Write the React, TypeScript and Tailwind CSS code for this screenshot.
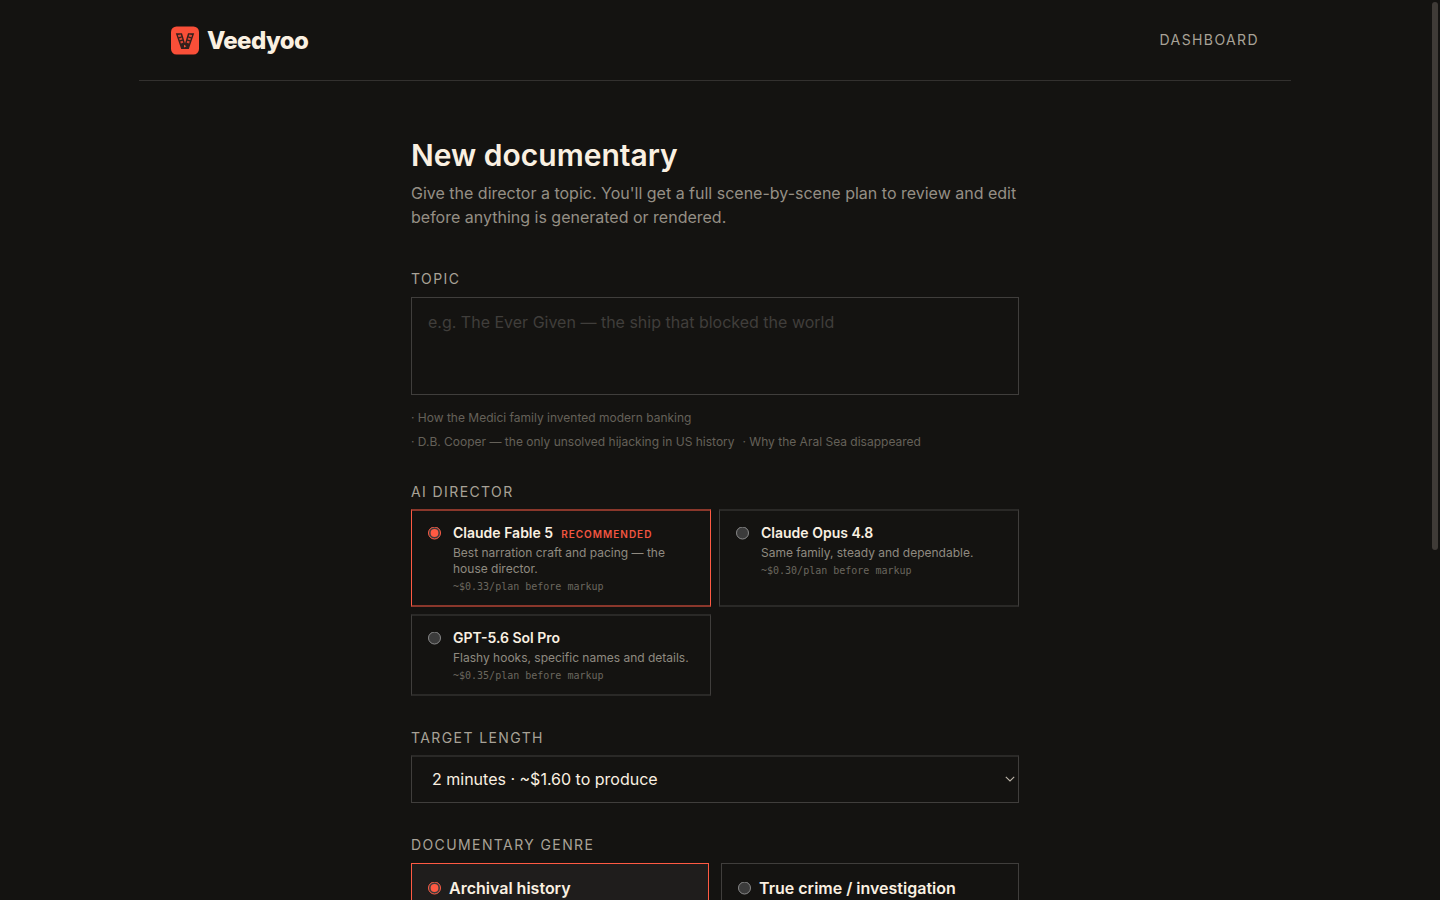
import type { ReactNode } from 'react';

const directors = [
  {
    name: 'Claude Fable 5',
    blurb: 'Best narration craft and pacing — the house director.',
    cost: '~$0.33/plan before markup',
    recommended: true,
  },
  {
    name: 'Claude Opus 4.8',
    blurb: 'Same family, steady and dependable.',
    cost: '~$0.30/plan before markup',
  },
  {
    name: 'GPT-5.6 Sol Pro',
    blurb: 'Flashy hooks, specific names and details.',
    cost: '~$0.35/plan before markup',
  },
];

const genres = ['Archival history', 'True crime / investigation'];

const Logo = () => (
  <svg
    width="28"
    height="28"
    viewBox="0 0 28 28"
    fill="none"
    className="overflow-visible"
  >
    <rect y="0.5" width="28" height="28" rx="5.5" fill="#f94f38" />
    <path
      d="M4.8 7.2h6.2l3 10.4 3-10.4h6.2L17.8 23h-7.6z"
      fill="#33201c"
    />
    {/* film frames */}
    <path
      d="M6.8 8.9l3-.5.6 2-2.9.8zM8 12.4l2.9-.8.5 1.9-2.7.8zM9.2 15.6l2.5-.8.6 1.9-2.4.8zM21.2 8.9l-3-.5-.6 2 2.9.8zM20 12.4l-2.9-.8-.5 1.9 2.7.8zM18.8 15.6l-2.5-.8-.6 1.9 2.4.8z"
      fill="#d94633"
    />
    <path d="M13 18.8l2.4 1.4-2.4 1.4z" fill="#f94f38" />
  </svg>
);

const Label = ({ children }: { children: ReactNode }) => (
  <div className="text-sm tracking-[1.4px] text-[#a8a297] uppercase">
    {children}
  </div>
);

const App = () => {
  return (
    <div className="flex h-[900px] overflow-hidden bg-[#141311] font-['Inter',sans-serif] text-[#faf0e1] scheme-dark">
      <div className="flex-1">
        {/* Header */}
        <header className="flex items-center justify-between h-[81px] max-w-6xl px-8 mx-auto border-b border-[#33312f]">
          <div className="flex items-center gap-2">
            <Logo />
            <span className="pt-[2px] text-2xl font-extrabold tracking-[-0.6px]">
              Veedyoo
            </span>
          </div>
          <a href="#" className="text-sm tracking-[1.4px] text-[#a8a297]">
            DASHBOARD
          </a>
        </header>
        {/* End Header */}

        <main className="max-w-2xl px-8 mx-auto pt-14">
          <h1 className="text-3xl font-semibold">New documentary</h1>
          <p className="mt-2 text-base text-[#958f85]">
            Give the director a topic. You'll get a full scene-by-scene plan to
            review and edit before anything is generated or rendered.
          </p>

          {/* Topic */}
          <section className="mt-10">
            <Label>Topic</Label>
            <textarea
              placeholder="e.g. The Ever Given — the ship that blocked the world"
              className="block w-full h-[98px] px-4 py-3 mt-2 text-base bg-transparent border border-[#403e3c] resize-none placeholder:text-[#403e3b]"
            />
            <div className="flex flex-wrap pt-[11px] gap-x-2 text-xs leading-6 text-[#656159]">
              <span>· How the Medici family invented modern banking</span>
              <span className="basis-full h-0" />
              <span>· D.B. Cooper — the only unsolved hijacking in US history</span>
              <span>· Why the Aral Sea disappeared</span>
            </div>
          </section>

          {/* AI director */}
          <section className="mt-7">
            <Label>AI director</Label>
            <div className="grid grid-cols-2 mt-[7px] gap-x-2 gap-y-[7px]">
              {directors.map((d) => (
                <label
                  key={d.name}
                  className={`flex gap-3 px-4 pt-3 pb-[10px] border-x border-y-2 ${
                    d.recommended
                      ? 'border-x-[#ff5a43] border-y-[#8a372b]'
                      : 'border-x-[#403e3c] border-y-[#2a2927]'
                  }`}
                >
                  <input
                    type="radio"
                    name="director"
                    defaultChecked={d.recommended}
                    className="mt-1 size-[13px] shrink-0 -translate-y-[0.5px] accent-[#ff5a43]"
                  />
                  <span>
                    <span className="flex items-center gap-2 text-sm font-semibold">
                      {d.name}
                      {d.recommended && (
                        <span className="pt-[2px] text-[10px] leading-4 font-semibold tracking-[1px] text-[#f25540] uppercase">
                          Recommended
                        </span>
                      )}
                    </span>
                    <span className="block mt-[2px] text-xs text-[#8f8a80]">
                      {d.blurb}
                    </span>
                    <span className="block mt-[2px] font-['DejaVu_Sans_Mono',monospace] text-[10px] leading-4 text-[#6b675f]">
                      {d.cost}
                    </span>
                  </span>
                </label>
              ))}
            </div>
          </section>

          {/* Length */}
          <section className="mt-8">
            <Label>Target length</Label>
            <div className="relative mt-[7px]">
              <select className="block w-full h-12 px-5 pb-[2px] text-base bg-[#141311] border border-t-2 border-[#403e3c] border-t-[#2a2927] appearance-none">
                <option>2 minutes · ~$1.60 to produce</option>
              </select>
              <svg
                width="10"
                height="6"
                viewBox="0 0 10 6"
                fill="none"
                stroke="#bdb6aa"
                strokeWidth="1.1"
                className="absolute right-1 top-[21px] pointer-events-none"
              >
                <path d="M.8.8L5 5 9.2.8" />
              </svg>
            </div>
          </section>

          {/* Genre */}
          <section className="mt-8">
            <Label>Documentary genre</Label>
            <div className="grid grid-cols-2 gap-3 mt-2">
              {genres.map((genre, i) => (
                <label
                  key={genre}
                  className={`flex items-start gap-2 h-24 px-4 pt-3 border font-semibold ${
                    i === 0
                      ? 'border-[#ff5a43] bg-[#1f1d1c]'
                      : 'border-[#403e3c]'
                  }`}
                >
                  <input
                    type="radio"
                    name="genre"
                    defaultChecked={i === 0}
                    className="mt-[6px] size-[13px] shrink-0 -translate-y-[0.5px] accent-[#ff5a43]"
                  />
                  {genre}
                </label>
              ))}
            </div>
          </section>
        </main>
      </div>

      {/* Scrollbar */}
      <div className="w-[10px] px-[2px] pt-[2px]">
        <div className="h-[548px] rounded-full bg-[#3f3b37]" />
      </div>
    </div>
  );
};

export default App;
